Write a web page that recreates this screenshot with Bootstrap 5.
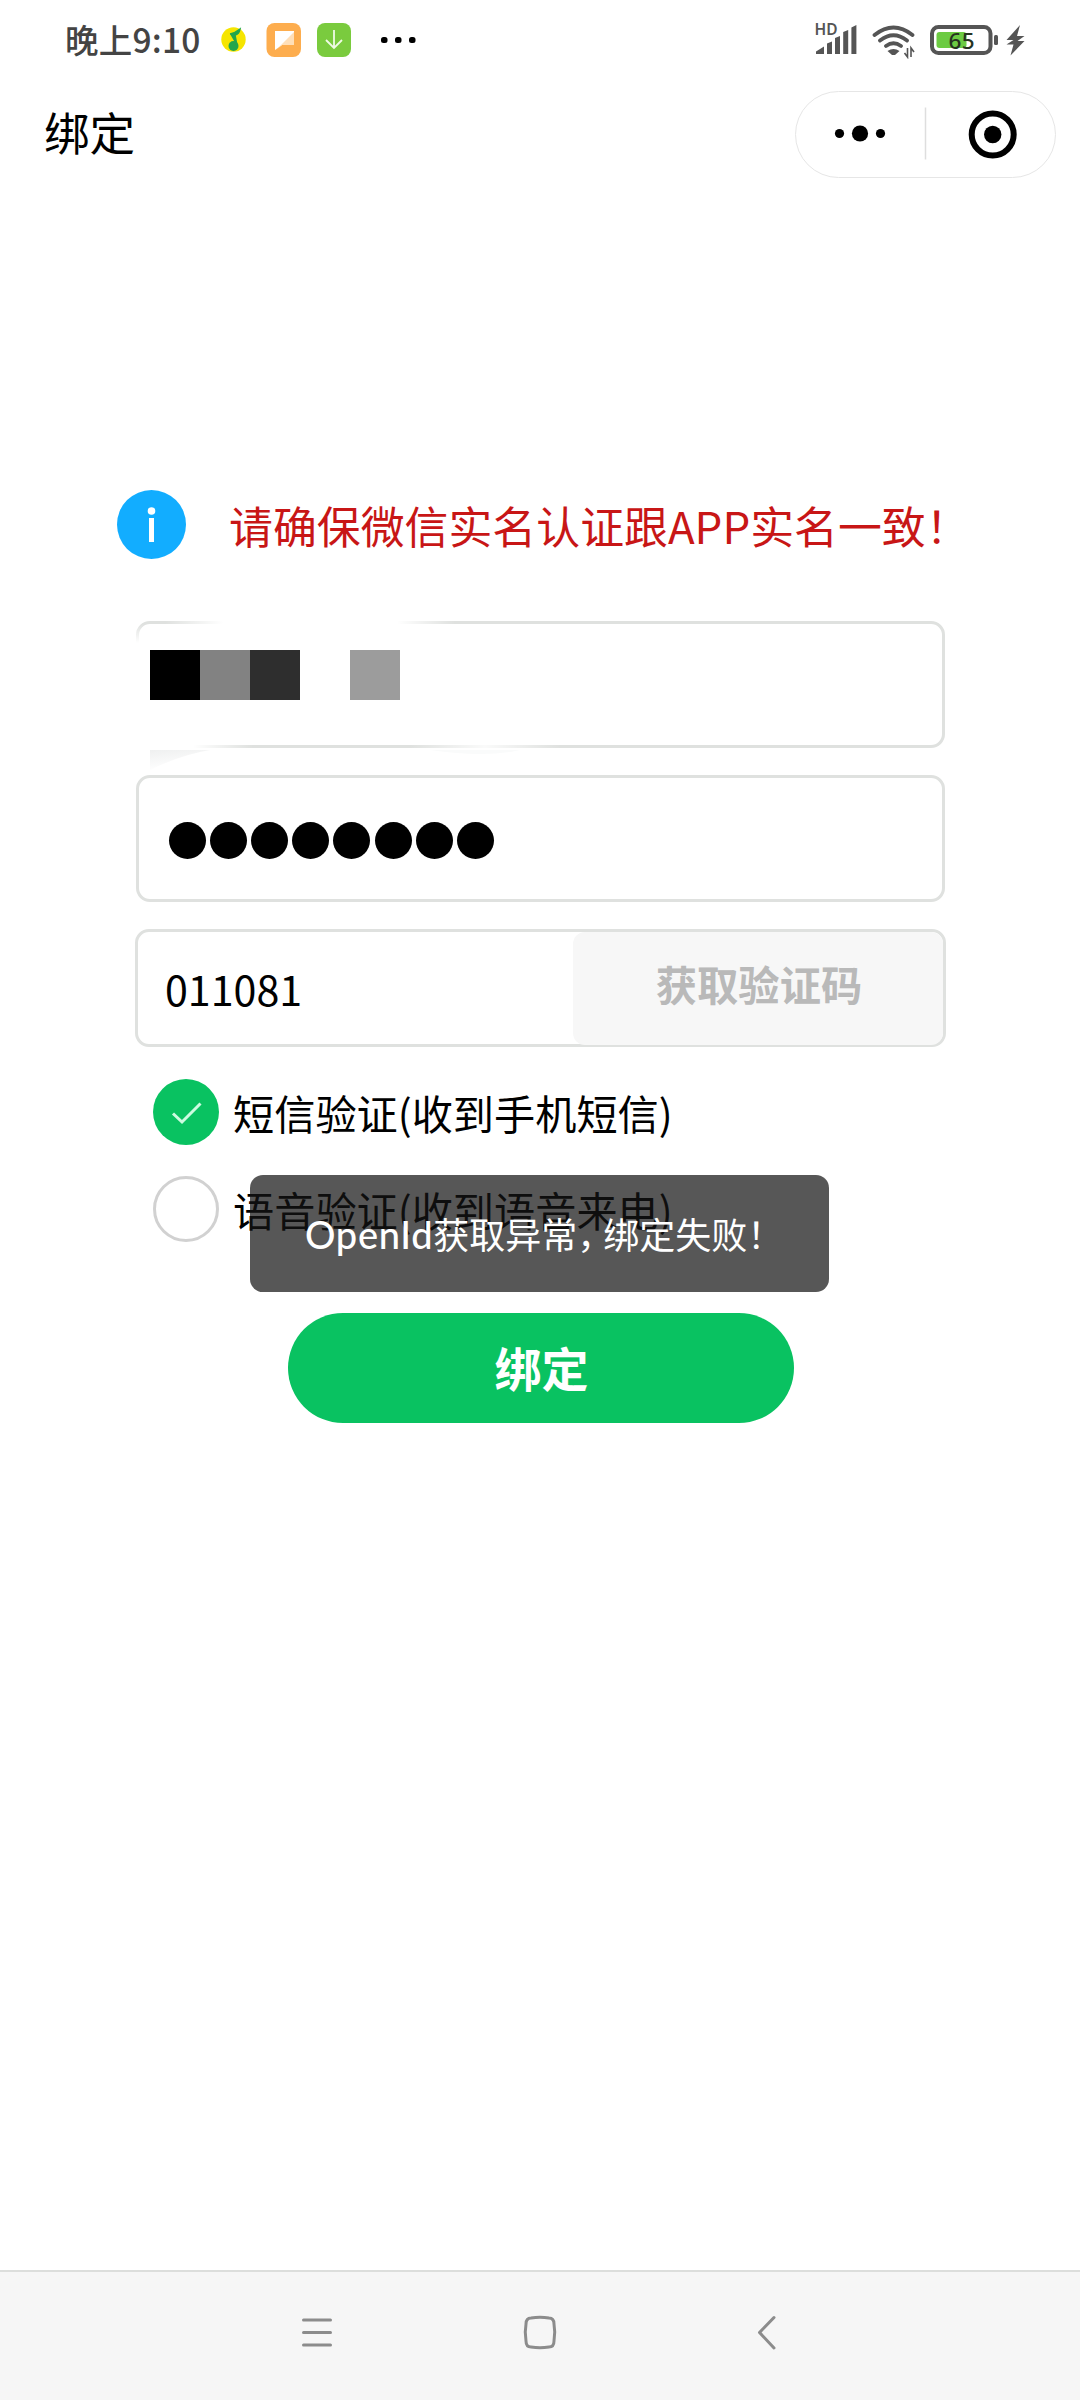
<!DOCTYPE html>
<html lang="zh-CN">
<head>
<meta charset="utf-8">
<meta name="viewport" content="width=device-width, initial-scale=1">
<title>绑定</title>
<link href="https://cdn.jsdelivr.net/npm/bootstrap@5.3.0/dist/css/bootstrap.min.css" rel="stylesheet">
<style>
  body { font-family: "Noto Sans CJK SC", sans-serif; color: #000; background: #fff; line-height: 1; }
  svg { display: block; flex: none; }
  .screen { width: 1080px; height: 2400px; overflow: hidden; }
  .status { height: 77px; padding: 0 54px 0 65px; }
  .clock { width: 151px; font-size: 33.5px; font-weight: 500; color: #444; line-height: 75px; letter-spacing: .2px; white-space: nowrap; }
  .titlebar { height: 113px; padding: 1px 24px 0 44px; }
  .page-title { font-size: 45.5px; font-weight: 400; line-height: 1; padding-bottom: 4px; }
  .capsule { width: 261px; height: 87px; border: 1.5px solid #e6e6e6; }
  .main-area { padding: 299px 134px 0 117px; }
  .notice { height: 70px; gap: 43px; }
  .notice p { font-size: 43.9px; line-height: 70px; color: #c81616; white-space: nowrap; padding-top: 2px; }
  .form-area { margin: 62px 0 0 18px; width: 811px; }
  .field { height: 127px; border: 3px solid #dfe1df; border-radius: 14px; margin: 0 1px 27px; }
  .pwd { padding: 3px 0 0 29.7px; gap: 4.2px; }
  .pwd i { width: 37px; height: 37px; border-radius: 50%; background: #000; }
  .code-field { height: 118px; margin: 0; }
  .code-value { flex: 1; padding: 2px 0 0 27px; font-size: 41.2px; }
  .code-btn { width: 370px; height: 113px; border: 0; border-radius: 12px; background: #f7f7f7; color: #b9b9b9; font-size: 41.3px; font-weight: 700; padding: 0 0 9px 2px; }
  .mosaic { left: -10px; top: -8px; }
  .choices { padding: 32px 0 0 18px; }
  .choice { height: 66px; gap: 14px; font-size: 41.2px; margin-bottom: 31px; white-space: nowrap; }
  .choice span { padding-top: 1px; }
  .tick { width: 66px; height: 66px; }
  .submit { width: 506px; height: 110px; margin: 71px 0 0 153px; border: 0; background: #09c261; color: #fff; font-size: 47px; font-weight: 700; padding: 0 0 4px 1px; }
  .notification { left: 250px; top: 1175px; width: 579px; height: 117px; border-radius: 13px; background: rgba(20,20,20,.715); color: #fff; font-size: 36px; padding-left: 55px; white-space: nowrap; }
  .latin { font-family: Lato, "Noto Sans", sans-serif; font-size: 38px; font-weight: 500; letter-spacing: .7px; }
  .comma { letter-spacing: -10px; }
  .navkeys { height: 130px; border-top: 2px solid #dcdedc; background: #f6f6f6; }
</style>
</head>
<body>
<div class="screen d-flex flex-column position-relative">

  <header class="status d-flex align-items-center">
    <span class="clock">晚上9:10</span>
    <svg width="205" height="40" viewBox="216 18 205 40">
      <circle cx="233.5" cy="38.5" r="12.2" fill="#f6e500"/>
      <circle cx="233.5" cy="45" r="5" fill="#22a64c"/>
      <path d="M230 33q5-1 10-5q-1 5-5 6l2 11" fill="#22a64c" stroke="#22a64c" stroke-width="1.5"/>
      <rect x="266.5" y="22" width="34.5" height="34" rx="8" fill="#fdad4e"/>
      <path d="M275 30h19v14h-12l-7 5z" fill="#fff"/>
      <path d="M294 31v13h-12l-6 5z" fill="#ffdfb8"/>
      <rect x="317" y="22" width="34" height="34" rx="8" fill="#7acb3e"/>
      <path d="M334 29v18M326 39l8 8l8-8" fill="none" stroke="#effbe5" stroke-width="1.8"/>
      <rect x="381" y="36" width="6.5" height="6" rx="2.5"/><rect x="395" y="36" width="6.5" height="6" rx="2.5"/><rect x="409" y="36" width="6.5" height="6" rx="2.5"/>
    </svg>
    <svg class="ms-auto" width="214" height="40" viewBox="812 18 214 40">
      <text x="814.5" y="34" font-family="Noto Sans" font-size="15.5" font-weight="600" fill="#555" textLength="23">HD</text>
      <g fill="#555">
        <path d="M816 53v-2.500l8-5v7.500zM827 53v-10.500l5-2v12.500zM835 53v-16l5-2v18zM843.200 53v-22l5-2v24zM851.400 53v-26.500l5-2.500v29z"/>
        <path d="M887.500 50q6-4 12 0l-4.500 4h-3z"/>
      </g>
      <g fill="none" stroke="#555" stroke-width="3.800" stroke-linecap="round">
        <path d="M874.500 34q19-15 38 0M880 39.500q13.500-10.500 27 0M886 45q7.500-5.500 15 0"/>
      </g>
      <path d="M907.500 47v9l-3-4M911 56v-9l3 4" fill="none" stroke="#555" stroke-width="1.600"/>
      <rect x="936.500" y="31" width="30" height="16" rx="3" fill="#6ccb42"/>
      <rect x="932" y="26" width="58.500" height="26" rx="6.500" fill="none" stroke="#555" stroke-width="4"/>
      <rect x="994" y="34" width="4" height="10" rx="1.500" fill="#555"/>
      <text x="948.500" y="47.500" font-family="Noto Sans" font-size="22.500" font-weight="500" fill="#26331f" textLength="26">65</text>
      <path d="M1020 24l-13.500 15h7l-7 4.500h7l-3 11l14-14.500h-7l7-5h-7.500z" fill="#555"/>
    </svg>
  </header>

  <nav class="titlebar d-flex align-items-center justify-content-between">
    <h1 class="page-title m-0">绑定</h1>
    <div class="capsule rounded-pill">
      <svg width="258" height="84" viewBox="796 92.500 258 84">
        <circle cx="839.500" cy="134" r="4.600"/><circle cx="860" cy="134" r="8.100"/><circle cx="880.500" cy="134" r="4.600"/>
        <path d="M925.500 108v52" stroke="#dedede" stroke-width="1.500"/>
        <circle cx="992.700" cy="135" r="21" fill="none" stroke="#000" stroke-width="6"/>
        <circle cx="992.700" cy="135" r="8.700"/>
      </svg>
    </div>
  </nav>

  <main class="main-area flex-grow-1">
    <div class="notice d-flex align-items-center">
      <svg width="69" height="69" viewBox="0 0 69 69">
        <circle cx="34.500" cy="34.500" r="34.500" fill="#12adff"/>
        <circle cx="34.500" cy="21" r="3.800" fill="#fff"/><rect x="32" y="28" width="5" height="24" fill="#fff"/>
      </svg>
      <p class="m-0">请确保微信实名认证跟APP实名一致！</p>
    </div>

    <div class="form-area">
      <div class="field position-relative">
        <svg class="mosaic position-absolute" width="440" height="165" viewBox="129 616 440 165">
          <defs>
            <linearGradient id="topFade"><stop offset="0" stop-color="#fff" stop-opacity="0"/><stop offset=".2" stop-color="#fff"/><stop offset=".8" stop-color="#fff"/><stop offset="1" stop-color="#fff" stop-opacity="0"/></linearGradient>
            <linearGradient id="sideFade" x2="0" y2="1"><stop offset="0" stop-color="#fff" stop-opacity="0"/><stop offset=".15" stop-color="#fff"/><stop offset="1" stop-color="#fff"/></linearGradient>
            <linearGradient id="bottomFade"><stop offset="0" stop-color="#fff"/><stop offset=".5" stop-color="#fff"/><stop offset="1" stop-color="#fff" stop-opacity="0"/></linearGradient>
            <linearGradient id="midFade"><stop offset="0" stop-color="#fff" stop-opacity="0"/><stop offset=".5" stop-color="#fff" stop-opacity=".85"/><stop offset="1" stop-color="#fff" stop-opacity="0"/></linearGradient>
            <linearGradient id="smudge" x2=".35" y2="1"><stop offset="0" stop-color="#eff0f0"/><stop offset="1" stop-color="#fff"/></linearGradient>
          </defs>
          <rect x="165" y="618" width="290" height="8" fill="url(#topFade)"/>
          <rect x="132" y="624" width="16" height="126" fill="url(#sideFade)"/>
          <rect x="133" y="742" width="120" height="8" fill="url(#bottomFade)"/>
          <rect x="410" y="742" width="150" height="8" fill="url(#midFade)"/>
          <path d="M150 750h60q-30 5-60 20z" fill="url(#smudge)"/>
          <path d="M430 750h90q-35 8-90 0z" fill="#fafbfb"/>
          <g shape-rendering="crispEdges">
            <rect x="150" y="650" width="50" height="50"/><rect x="200" y="650" width="50" height="50" fill="#828282"/>
            <rect x="250" y="650" width="50" height="50" fill="#2e2e2e"/><rect x="350" y="650" width="50" height="50" fill="#9c9c9c"/>
          </g>
        </svg>
      </div>
      <div class="field pwd d-flex align-items-center"><i></i><i></i><i></i><i></i><i></i><i></i><i></i><i></i></div>
      <div class="field code-field d-flex align-items-center">
        <span class="code-value">011081</span>
        <button class="code-btn" type="button">获取验证码</button>
      </div>

      <div class="choices">
        <div class="choice d-flex align-items-center">
          <svg class="tick" viewBox="0 0 66 66"><circle cx="33" cy="33" r="33" fill="#09c261"/><path d="M20 34.500l9 8.500l18.500-18.500" fill="none" stroke="#cdfbe0" stroke-width="3"/></svg>
          <span>短信验证(收到手机短信)</span>
        </div>
        <div class="choice d-flex align-items-center">
          <svg class="tick" viewBox="0 0 66 66"><circle cx="33" cy="33" r="31.500" fill="#fff" stroke="#d1d1d1" stroke-width="3"/></svg>
          <span>语音验证(收到语音来电)</span>
        </div>
      </div>
      <button class="submit rounded-pill d-block" type="button">绑定</button>
    </div>
  </main>

  <div class="notification position-absolute d-flex align-items-center"><span><span class="latin">OpenId</span>获取异常<span class="comma">，</span>绑定失败！</span></div>

  <footer class="navkeys">
    <svg width="1080" height="128" viewBox="0 2274 1080 128" fill="none" stroke="#8c8c8c" stroke-width="3" stroke-linecap="round" stroke-linejoin="round">
      <path d="M303.500 2322h27M303.500 2334.500h27M303.500 2347h27"/>
      <path d="M531 2320q9-1.500 18 0q5 0 5 6q1.500 8 0 17q0 6-5 6q-9 1.500-18 0q-5 0-5-6q-1.500-9 0-17q0-6 5-6z"/>
      <path d="M774 2319.500l-14.500 15l14.500 15.500"/>
    </svg>
  </footer>
</div>
<script src="https://cdn.jsdelivr.net/npm/bootstrap@5.3.0/dist/js/bootstrap.bundle.min.js"></script>
</body>
</html>
